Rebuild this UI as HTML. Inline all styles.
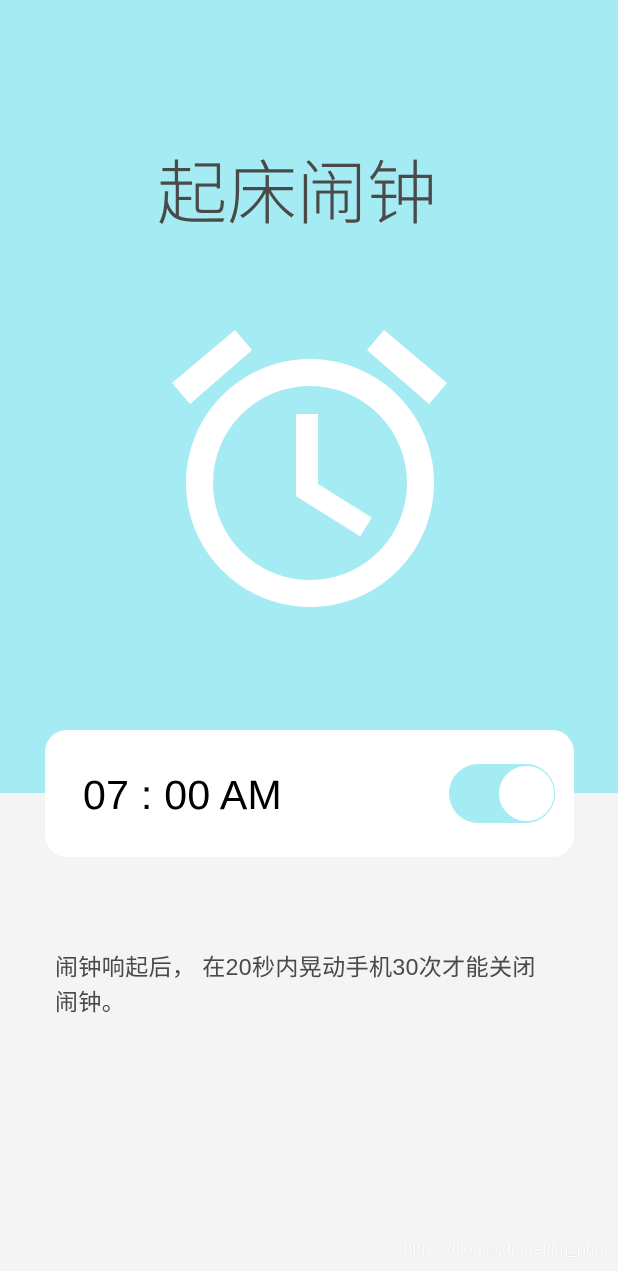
<!DOCTYPE html>
<html><head><meta charset="utf-8"><style>
*{margin:0;padding:0;box-sizing:border-box}
body{width:618px;height:1271px;background:#f4f4f4;position:relative;overflow:hidden;font-family:"Liberation Sans","Noto Sans CJK SC",sans-serif}
.top{position:absolute;left:0;top:0;width:618px;height:793px;background:#a5ebf3}
.title{position:absolute;left:-12px;width:618px;top:142px;text-align:center;font-size:70px;line-height:94px;color:#4a4a4a;font-family:"Noto Sans CJK SC",sans-serif;font-weight:300}
.card{position:absolute;left:45px;top:730px;width:529px;height:127px;background:#fff;border-radius:22px}
.time{position:absolute;left:38px;top:40px;font-size:41px;line-height:50px;color:#000;letter-spacing:0.3px}
.tog{position:absolute;left:404px;top:34px;width:106px;height:59px;border-radius:30px;background:#a5ebf3}
.knob{position:absolute;right:0;top:1px;width:57px;height:57px;border-radius:50%;background:#fff;border:1px solid #a5ebf3}
.desc{position:absolute;left:55px;top:950px;width:495px;font-size:23px;line-height:35px;color:#4a4a4a;font-family:"Liberation Sans","Noto Sans CJK SC",sans-serif;letter-spacing:0.4px}
.wm{position:absolute;right:10px;top:1241px;font-size:16px;color:#fff;text-shadow:0 0 1px #ccc}
</style></head><body>
<div class="top"></div>
<div class="title">起床闹钟</div>
<svg style="position:absolute;left:0;top:0" width="618" height="793">
<circle cx="310" cy="483" r="110.5" fill="none" stroke="#fff" stroke-width="27"/>
<polyline points="307,414 307,490 366,527" fill="none" stroke="#fff" stroke-width="22"/>
<polygon points="172,383 235,330 252,350 190,404" fill="#fff"/>
<polygon points="367,350 384,330 447,383 429,404" fill="#fff"/>
</svg>
<div class="card"><div class="time">07 : 00 AM</div><div class="tog"><div class="knob"></div></div></div>
<div class="desc">闹钟响起后， 在20秒内晃动手机30次才能关闭<br>闹钟。</div>
<div class="wm">https://blog.csdn.net/lm_print</div>
</body></html>
